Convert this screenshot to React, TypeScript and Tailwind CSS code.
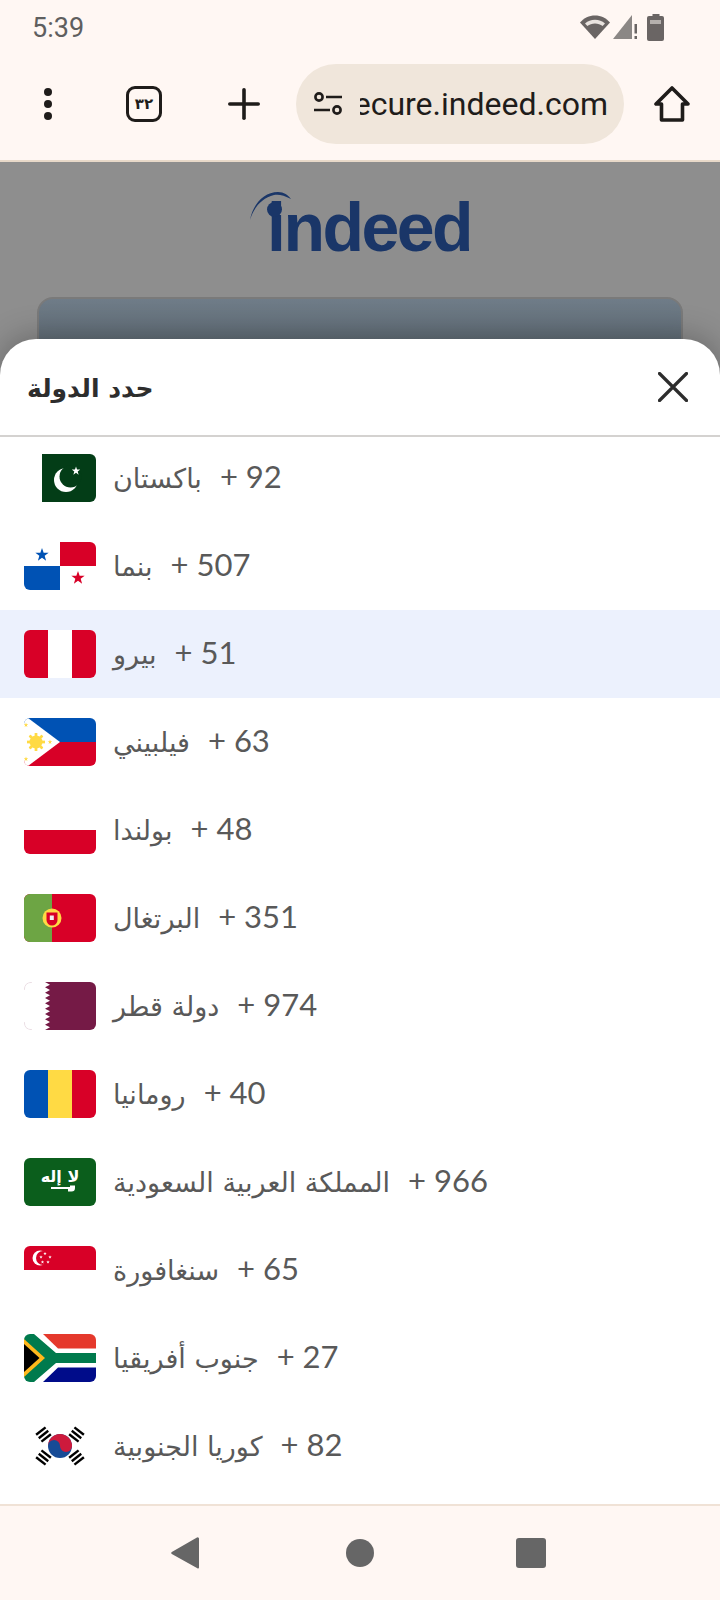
import type { ReactNode } from 'react'

type Country = { name: string; code: string; flag: ReactNode; selected?: boolean }

const RED = '#d80027'
const BLUE = '#0052b4'

const star = (cx: number, cy: number, r: number) => {
  const pts: string[] = []
  for (let i = 0; i < 10; i++) {
    const a = (Math.PI / 5) * i - Math.PI / 2
    const rr = i % 2 === 0 ? r : r * 0.4
    pts.push(`${(cx + rr * Math.cos(a)).toFixed(2)},${(cy + rr * Math.sin(a)).toFixed(2)}`)
  }
  return pts.join(' ')
}

function Flag({ children }: { children: ReactNode }) {
  return (
    <svg viewBox="0 0 72 48" className="w-[72px] h-[48px] shrink-0 rounded-[6px]">
      {children}
    </svg>
  )
}

const sunRays = Array.from({ length: 8 }, (_, i) => i * 45)

const trigrams: [number, number, number][] = [
  [-38, 19.5, 12.5],
  [38, 52.5, 12.5],
  [-142, 19.5, 35.5],
  [142, 52.5, 35.5],
]

const COUNTRIES: Country[] = [
  {
    name: 'باكستان',
    code: '92',
    flag: (
      <Flag>
        <rect width="72" height="48" fill="#fff" />
        <rect x="18" width="54" height="48" fill="#033d17" />
        <circle cx="42" cy="26" r="12" fill="#fff" />
        <circle cx="46.5" cy="22.5" r="11" fill="#033d17" />
        <polygon points={star(52, 17, 4.5)} fill="#fff" />
      </Flag>
    ),
  },
  {
    name: 'بنما',
    code: '507',
    flag: (
      <Flag>
        <rect width="72" height="48" fill="#fff" />
        <rect x="36" width="36" height="24" fill={RED} />
        <rect y="24" width="36" height="24" fill={BLUE} />
        <polygon points={star(18, 13, 7)} fill={BLUE} />
        <polygon points={star(54, 36, 7)} fill={RED} />
      </Flag>
    ),
  },
  {
    name: 'بيرو',
    code: '51',
    selected: true,
    flag: (
      <Flag>
        <rect width="72" height="48" fill="#fff" />
        <rect width="24" height="48" fill={RED} />
        <rect x="48" width="24" height="48" fill={RED} />
      </Flag>
    ),
  },
  {
    name: 'فيلبيني',
    code: '63',
    flag: (
      <Flag>
        <rect width="72" height="48" fill="#fff" />
        <rect width="72" height="24" fill={BLUE} />
        <rect y="24" width="72" height="24" fill={RED} />
        <polygon points="0,-3 36,24 0,51" fill="#fff" />
        {sunRays.map(a => (
          <rect key={a} x="10.8" y="15" width="2.4" height="18" fill="#ffda44" transform={`rotate(${a} 12 24)`} />
        ))}
        <circle cx="12" cy="24" r="6.5" fill="#ffda44" />
        <polygon points={star(2, 7, 2.4)} fill="#ffda44" />
        <polygon points={star(2, 41, 2.4)} fill="#ffda44" />
        <polygon points={star(26, 24, 2.4)} fill="#ffda44" />
      </Flag>
    ),
  },
  {
    name: 'بولندا',
    code: '48',
    flag: (
      <Flag>
        <rect width="72" height="24" fill="#fff" />
        <rect y="24" width="72" height="24" fill={RED} />
      </Flag>
    ),
  },
  {
    name: 'البرتغال',
    code: '351',
    flag: (
      <Flag>
        <rect width="72" height="48" fill={RED} />
        <rect width="28" height="48" fill="#6da544" />
        <circle cx="28" cy="24" r="9.5" fill="#ffda44" />
        <path d="M22.5 18.5h11v7.5a5.5 5.5 0 0 1-11 0z" fill={RED} />
        <rect x="25.8" y="21.5" width="4" height="4.5" fill="#f0f0f0" />
      </Flag>
    ),
  },
  {
    name: 'دولة قطر',
    code: '974',
    flag: (
      <Flag>
        <rect width="72" height="48" fill="#fff" />
        <polygon
          points="72,0 72,48 21,48 26,45.3 21,42.7 26,40 21,37.3 26,34.7 21,32 26,29.3 21,26.7 26,24 21,21.3 26,18.7 21,16 26,13.3 21,10.7 26,8 21,5.3 26,2.7 21,0"
          fill="#751a46"
        />
        <path d="M8 .3Q.3.3.3 8M.3 40q0 7.7 7.700 7.700" fill="none" stroke="#e6d5dd" strokeWidth="0.800" />
      </Flag>
    ),
  },
  {
    name: 'رومانيا',
    code: '40',
    flag: (
      <Flag>
        <rect width="24" height="48" fill={BLUE} />
        <rect x="24" width="24" height="48" fill="#ffda44" />
        <rect x="48" width="24" height="48" fill={RED} />
      </Flag>
    ),
  },
  {
    name: 'المملكة العربية السعودية',
    code: '966',
    flag: (
      <Flag>
        <rect width="72" height="48" fill="#0b5e1c" />
        <text x="36" y="24" textAnchor="middle" fontSize="16" fontWeight="700" fill="#fff" fontFamily="'DejaVu Sans', sans-serif">
          لا إله
        </text>
        <path d="M27 29h19v-1.500h5v2.500q0 3.500-3.500 3.500h-3.500v-2.500h-17z" fill="#fff" />
      </Flag>
    ),
  },
  {
    name: 'سنغافورة',
    code: '65',
    flag: (
      <Flag>
        <rect width="72" height="48" fill="#fff" />
        <rect width="72" height="24" fill={RED} />
        <circle cx="16" cy="12" r="7.5" fill="#fff" />
        <circle cx="19" cy="12" r="7" fill={RED} />
        <polygon points={star(21, 7.5, 1.8)} fill="#fff" />
        <polygon points={star(26, 11, 1.8)} fill="#fff" />
        <polygon points={star(24, 16, 1.8)} fill="#fff" />
        <polygon points={star(18.5, 16, 1.8)} fill="#fff" />
        <polygon points={star(17, 11, 1.8)} fill="#fff" />
      </Flag>
    ),
  },
  {
    name: 'جنوب أفريقيا',
    code: '27',
    flag: (
      <Flag>
        <rect width="72" height="48" fill="#fff" />
        <polygon points="19,0 72,0 72,14.5 34,14.5" fill="#e5392c" />
        <polygon points="19,48 72,48 72,33.5 34,33.5" fill="#000c8a" />
        <polygon points="0,0 10,0 32,19 72,19 72,29 32,29 10,48 0,48" fill="#007a4d" />
        <polygon points="0,5 21,24 0,43" fill="#ffb81c" />
        <polygon points="0,10 15.5,24 0,38" fill="#000" />
      </Flag>
    ),
  },
  {
    name: 'كوريا الجنوبية',
    code: '82',
    flag: (
      <Flag>
        <rect width="72" height="48" fill="#fff" />
        <circle cx="36" cy="24" r="12" fill="#174b96" />
        <path d="M24 24a12 12 0 0 1 24 0a6 6 0 0 1-12 0a6 6 0 0 0-12 0z" fill="#cd1a3c" />
        {trigrams.map(([rot, x, y]) => (
          <g key={rot} transform={`rotate(${rot} ${x} ${y})`}>
            <rect x={x - 6} y={y - 5.5} width="12" height="2.4" fill="#000" />
            <rect x={x - 6} y={y - 1.2} width="12" height="2.4" fill="#000" />
            <rect x={x - 6} y={y + 3.1} width="12" height="2.4" fill="#000" />
          </g>
        ))}
      </Flag>
    ),
  },
]

function StatusBar() {
  return (
    <div className="h-[54px] flex items-center justify-between pl-[32px] pr-[55px] text-[#5f5f5f]">
      <span className="text-[27px] leading-none mt-[2px] font-['Roboto',sans-serif]">5:39</span>
      <div className="flex items-center gap-[3px]">
        <svg viewBox="0 0 30 26" className="w-[30px] h-[26px]" fill="#6a6564">
          <path d="M15 25 0 8.5C4 4 9 1.5 15 1.5S26 4 30 8.5z" />
          <path d="M5 9.5C8 7 11 5.8 15 5.8s7 1.2 10 3.7l-2.4 2.6C20.5 10.400 18 9.500 15 9.500s-5.500.9-7.600 2.600z" fill="#e9e3df" />
        </svg>
        <svg viewBox="0 0 30 26" className="w-[30px] h-[26px]">
          <polygon points="0,25 19,1 19,25" fill="#8b8785" />
          <rect x="21.500" y="10" width="2.500" height="9.500" fill="#6a6564" />
          <rect x="21.500" y="22" width="2.500" height="3" fill="#6a6564" />
        </svg>
        <svg viewBox="0 0 18 27" className="w-[18px] h-[27px] ml-[1px]">
          <rect x="5.500" width="7" height="3" fill="#6a6564" />
          <rect y="2" width="17" height="25" rx="2" fill="#6a6564" />
          <rect x="3" y="6" width="11" height="4" fill="#b5b0ad" />
        </svg>
      </div>
    </div>
  )
}

function Toolbar() {
  return (
    <div className="h-[108px] flex items-center border-b-2 border-[#e8d9c9] pb-[6px] text-[#1f1c1a]">
      <div className="w-[96px] flex justify-center">
        <svg viewBox="0 0 10 32" className="w-[10px] h-[32px]" fill="currentColor">
          <circle cx="5" cy="4" r="4" />
          <circle cx="5" cy="16" r="4" />
          <circle cx="5" cy="28" r="4" />
        </svg>
      </div>
      <div className="ml-[30px] w-[36px] h-[36px] rounded-[9px] border-[3.5px] border-[#1f1c1a] flex items-center justify-center">
        <span className="text-[15px] font-bold leading-none font-['DejaVu_Sans',sans-serif]">٣٢</span>
      </div>
      <svg viewBox="0 0 32 32" className="ml-[66px] w-[32px] h-[32px]" fill="currentColor">
        <rect x="14.200" width="3.600" height="32" rx="1.800" />
        <rect y="14.200" width="32" height="3.600" rx="1.800" />
      </svg>
      <div className="ml-[36px] w-[328px] h-[80px] rounded-full bg-[#f0e6db] flex items-center pl-[18px]">
        <svg viewBox="0 0 28 24" className="w-[28px] h-[24px] shrink-0" fill="none" stroke="currentColor" strokeWidth="2.600">
          <circle cx="5" cy="5" r="3.600" />
          <path d="M12 5h16M0 18h16" />
          <circle cx="23" cy="18" r="3.600" />
        </svg>
        <div className="ml-[18px] w-[248px] overflow-hidden flex justify-end">
          <span className="text-[32px] leading-[40px] whitespace-nowrap font-['Roboto',sans-serif]">secure.indeed.com</span>
        </div>
      </div>
      <svg viewBox="0 0 36 36" className="ml-[30px] w-[36px] h-[36px]" fill="none" stroke="currentColor" strokeWidth="3.600" strokeLinejoin="round">
        <path d="M18 2 2 18h5.500v16h21V18H34z" />
      </svg>
    </div>
  )
}

function Backdrop() {
  return (
    <div className="h-[220px] bg-[#8e8e8e] pt-[25px] overflow-hidden">
      <div className="relative w-[220px] h-[64px] ml-[250px] text-[#1a3668]">
        <svg viewBox="0 0 50 40" className="absolute left-0 top-[5px] w-[50px] h-[40px]" fill="currentColor">
          <path d="M0 28C3 12 14 0 28 0C34 0 38 3 41 7C34 3 28 2 24 3C12 6 4 15 0 28z" />
        </svg>
        <div className="absolute left-[17px] top-[0px] text-[68px] leading-[80px] font-bold tracking-[-2.5px] font-['Liberation_Sans',sans-serif]">
          indeed
        </div>
        <div className="absolute left-[17px] top-[15px] w-[15px] h-[15px] rounded-full bg-[#1a3668]" />
      </div>
      <div className="mx-[37px] mt-[46px] h-[80px] rounded-t-[16px] border-2 border-[#7a7a7a] bg-gradient-to-b from-[#6f7c88] to-[#58636b]" />
    </div>
  )
}

function CountryRow({ country }: { country: Country }) {
  return (
    <div className={`h-[88px] flex items-center pl-[24px] ${country.selected ? 'bg-[#ecf1fd]' : ''}`}>
      {country.flag}
      <div className="ml-[17px] -mt-[3px] flex items-baseline gap-[18px] text-[#595959] whitespace-nowrap">
        <span className="text-[27px] font-['DejaVu_Sans',sans-serif]">{country.name}</span>
        <span className="text-[31px] font-['Lato',sans-serif]">+ {country.code}</span>
      </div>
    </div>
  )
}

export default function App() {
  return (
    <div className="relative w-[720px] h-[1600px] bg-[#fff7f3] overflow-hidden flex flex-col">
      <StatusBar />
      <Toolbar />
      <Backdrop />

      {/* bottom sheet */}
      <div className="absolute inset-x-0 top-[339px] h-[1165px] bg-white rounded-t-[36px] shadow-[0_-4px_30px_rgba(0,0,0,0.25)] overflow-hidden">
        <div className="h-[98px] flex items-center justify-between pl-[27px] pr-[32px] border-b-2 border-[#d4d2d0]">
          <span className="mt-[3px] text-[25px] font-bold text-[#2d2d2d] font-['DejaVu_Sans',sans-serif]">حدد الدولة</span>
          <svg viewBox="0 0 30 30" className="w-[30px] h-[30px]" fill="none" stroke="#2d2d2d" strokeWidth="3.200" strokeLinecap="round">
            <path d="M1.500 1.500l27 27M28.500 1.500l-27 27" />
          </svg>
        </div>
        <div className="-mt-[3px]">
          {COUNTRIES.map(c => (
            <CountryRow key={c.code} country={c} />
          ))}
        </div>
      </div>

      {/* nav bar */}
      <div className="absolute inset-x-0 bottom-0 h-[96px] border-t-2 border-[#f0e2d6] bg-[#fff7f3] flex items-center">
        <svg viewBox="0 0 28 32" className="ml-[171px] w-[28px] h-[32px]" fill="#666">
          <path d="M27 .5a1 1 0 0 1 1 1v29a1 1 0 0 1-1.600.8L.8 17a1.300 1.300 0 0 1 0-2L26.400.3z" />
        </svg>
        <div className="ml-[147px] w-[28px] h-[28px] rounded-full bg-[#666]" />
        <div className="ml-[142px] w-[30px] h-[30px] rounded-[3px] bg-[#666]" />
      </div>
    </div>
  )
}
